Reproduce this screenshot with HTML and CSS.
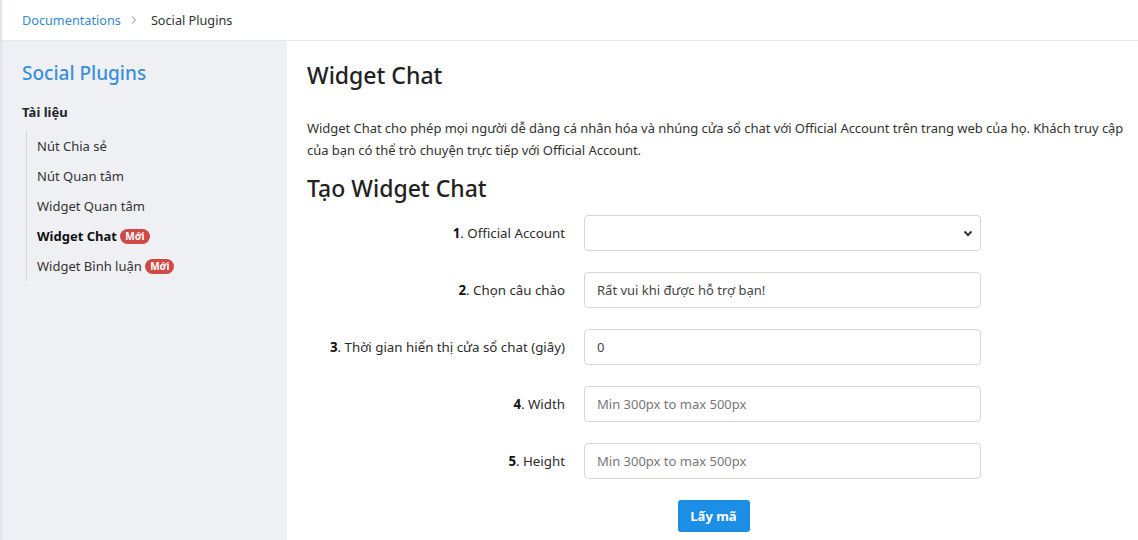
FILE: index.html
```html
<!DOCTYPE html>
<html lang="vi">
<head>
<meta charset="utf-8">
<title>Widget Chat</title>
<link rel="stylesheet" href="styles.css">
</head>
<body>
<div class="page">
  <header class="crumbs">
    <a class="crumb-link" href="#">Documentations</a>
    <span class="crumb-sep">
      <svg width="8" height="10" viewBox="0 0 8 10"><path d="M2 1.5 L5.5 5 L2 8.5" fill="none" stroke="#b8bcc2" stroke-width="1.3"/></svg>
    </span>
    <span class="crumb-current">Social Plugins</span>
  </header>
  <div class="body">
    <aside class="sidebar">
      <h2 class="side-title">Social Plugins</h2>
      <h3 class="side-section">Tài liệu</h3>
      <ul class="side-list">
        <li>Nút Chia sẻ</li>
        <li>Nút Quan tâm</li>
        <li>Widget Quan tâm</li>
        <li class="active">Widget Chat <span class="badge">Mới</span></li>
        <li>Widget Bình luận <span class="badge">Mới</span></li>
      </ul>
    </aside>
    <main class="content">
      <h1 class="title">Widget Chat</h1>
      <p class="intro">Widget Chat cho phép mọi người dễ dàng cá nhân hóa và nhúng cửa sổ chat với Official Account trên trang web của họ. Khách truy cập của bạn có thể trò chuyện trực tiếp với Official Account.</p>
      <h2 class="subtitle">Tạo Widget Chat</h2>
      <form class="form">
        <label class="label"><b>1</b>. Official Account</label>
        <div class="select">
          <svg width="12" height="12" viewBox="0 0 12 12"><path d="M2.5 4.5 L6 8 L9.5 4.5" fill="none" stroke="#333" stroke-width="2"/></svg>
        </div>
        <label class="label"><b>2</b>. Chọn câu chào</label>
        <div class="input">Rất vui khi được hỗ trợ bạn!</div>
        <label class="label"><b>3</b>. Thời gian hiển thị cửa sổ chat (giây)</label>
        <div class="input">0</div>
        <label class="label"><b>4</b>. Width</label>
        <div class="input placeholder">Min 300px to max 500px</div>
        <label class="label"><b>5</b>. Height</label>
        <div class="input placeholder">Min 300px to max 500px</div>
        <div class="actions"><button type="button" class="btn">Lấy mã</button></div>
      </form>
    </main>
  </div>
</div>
</body>
</html>
```

FILE: styles.css
```css
* { box-sizing: border-box; }
html, body { margin: 0; padding: 0; }
body {
  font-family: "Noto Sans", "Open Sans", sans-serif;
  font-size: 13px;
  color: #212529;
  background: #fff;
}
.page {
  border-left: 2px solid #e2e5ea;
  height: 540px;
  overflow: hidden;
  display: flex;
  flex-direction: column;
}
.crumbs {
  height: 41px;
  border-bottom: 1px solid #e3e6ea;
  display: flex;
  align-items: center;
  padding-left: 20px;
  font-size: 12.7px;
  flex-shrink: 0;
}
.crumb-link { color: #3889cf; text-decoration: none; }
.crumb-sep { margin: 0 13px 0 9px; display: flex; }
.crumb-current { color: #333; }
.body { display: flex; flex: 1; }
.sidebar {
  width: 285px;
  background: #eef0f4;
  padding: 19px 0 0 20px;
  flex-shrink: 0;
}
.side-title {
  margin: 0;
  color: #3a8fdb;
  font-size: 19px;
  font-weight: 500;
  line-height: 26px;
}
.side-section {
  margin: 16px 0 0;
  font-size: 13px;
  font-weight: 700;
  line-height: 20px;
}
.side-list {
  list-style: none;
  margin: 9px 0 0 4px;
  padding: 0 0 0 10px;
  border-left: 1px solid #d3d6db;
}
.side-list li {
  line-height: 20px;
  padding: 5px 0;
  color: #333;
}
.side-list li.active { font-weight: 700; color: #111; }
.badge {
  display: inline-block;
  background: #cf4a45;
  color: #fff;
  font-size: 10px;
  font-weight: 700;
  line-height: 15px;
  padding: 0 5px;
  border-radius: 8px;
  vertical-align: 1px;
}
.content {
  flex: 1;
  padding: 17px 8px 0 20px;
}
.title {
  margin: 0;
  font-size: 23px;
  font-weight: 500;
  line-height: 34px;
  color: #222;
}
.intro {
  margin: 25px 0 0;
  line-height: 22px;
  color: #333;
  letter-spacing: -0.05px;
  max-width: 822px;
}
.subtitle {
  margin: 12px 0 0;
  font-size: 23px;
  font-weight: 500;
  line-height: 30px;
  color: #222;
}
.form {
  display: grid;
  grid-template-columns: 258px 397px 1fr;
  column-gap: 19px;
  row-gap: 21px;
  align-items: center;
  margin-top: 12px;
  width: 811px;
}
.label {
  grid-column: 1;
  text-align: right;
  color: #2b2b2b;
  font-size: 13.3px;
}
.label b { color: #111; }
.select, .input {
  grid-column: 2;
  height: 36px;
  border: 1px solid #d4d7dc;
  border-radius: 4px;
  display: flex;
  align-items: center;
  padding: 0 12px;
  color: #444;
}
.select { justify-content: flex-end; padding-right: 6px; }
.placeholder { color: #777; }
.actions {
  grid-column: 1 / -1;
  display: flex;
  justify-content: center;
  padding-left: 2px;
  margin-top: 0;
}
.btn {
  font-family: inherit;
  font-size: 13px;
  font-weight: 700;
  color: #fff;
  background: #1c8ee6;
  border: none;
  border-radius: 3px;
  width: 72px;
  height: 32px;
}
```
